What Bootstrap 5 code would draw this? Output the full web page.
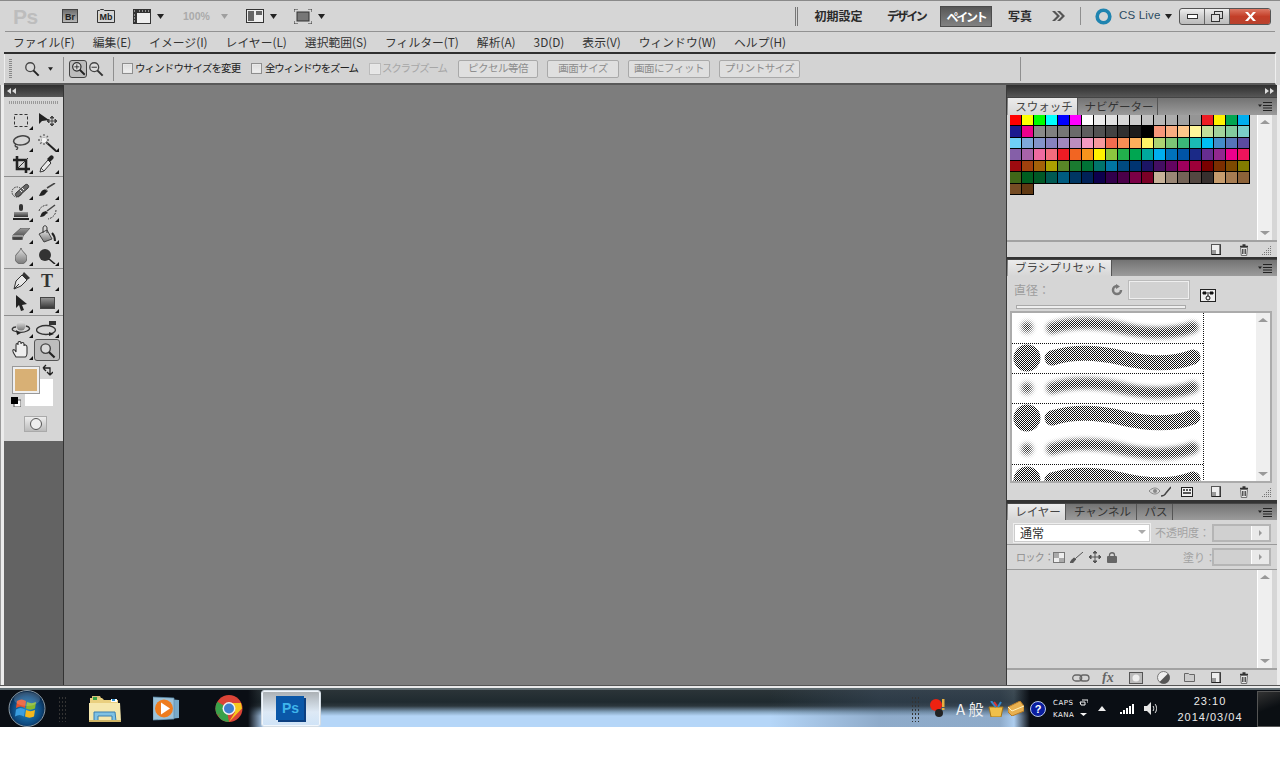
<!doctype html>
<html lang="ja"><head><meta charset="utf-8"><title>Photoshop CS5</title>
<link href="https://cdn.jsdelivr.net/npm/bootstrap@5.3.0/dist/css/bootstrap.min.css" rel="stylesheet">
<style>
html,body{height:100%;margin:0;background:#fff;overflow:hidden}
body{font-family:"Noto Sans CJK JP","Liberation Sans",sans-serif;font-size:12px;line-height:1;color:#2a2a2a}
svg{display:block;flex:none}
.gl-1{margin-left:1px}.gl-2{margin-left:2px}.gl-3{margin-left:3px}.gl-4{margin-left:4px}.gl-5{margin-left:5px}.gl-6{margin-left:6px}.gl-7{margin-left:7px}.gl-8{margin-left:8px}.gl-9{margin-left:9px}.gl-10{margin-left:10px}.gl-11{margin-left:11px}.gl-12{margin-left:12px}.gl-13{margin-left:13px}.gl-14{margin-left:14px}.gl-15{margin-left:15px}.gl-16{margin-left:16px}.gl-17{margin-left:17px}.gl-18{margin-left:18px}.gl-19{margin-left:19px}.gl-23{margin-left:23px}.gl-24{margin-left:24px}.gl-27{margin-left:27px}.gl-32{margin-left:32px}.gl-36{margin-left:36px}.gl-65{margin-left:65px}.gl-66{margin-left:66px}.gl-220{margin-left:220px}
.ps-app{width:1280px;height:688px;background:#d6d6d6;box-shadow:inset 0 1px 0 #8a8a8a}
.ps-appbar{height:32px;padding:1px 4px 0 8px;margin:0 5px;border-bottom:1px solid #929292;flex:none}
.ps-logo{font:700 21px/1 "Liberation Sans",sans-serif;color:#bdbdbd;width:22px;letter-spacing:-.5px}
.ps-zoomlbl{font:700 10.5px/1 "Liberation Sans",sans-serif;color:#aaa;width:28px;white-space:nowrap}
.ps-bold{font-weight:700;font-size:12px;color:#2b2b2b;text-align:center;white-space:nowrap}
.wa{width:49px}.wb{width:38px;letter-spacing:-2.4px}.wc{width:52px;height:21px;line-height:19px;color:#fff;background:linear-gradient(#575757,#828282);border:1px solid #4c4c4c;letter-spacing:-2.2px}.wd{width:24px}
.ps-csl{width:48px;font:11.5px/1 "Liberation Sans",sans-serif;color:#2b4a60;white-space:nowrap;letter-spacing:.2px}
.ps-vline{width:1px;height:18px;background:#8f8f8f}
.ps-dbl{width:3px;height:19px;border-left:1px solid #777;border-right:1px solid #777}
.ps-winbtns{width:92px;height:17px;border:1px solid #555;border-radius:3px;overflow:hidden;background:linear-gradient(#eee,#cfcfcf 50%,#bcbcbc)}
.ps-winbtns>div{height:100%;display:flex;align-items:center;justify-content:center}
.wmin,.wmax{width:25px;border-right:1px solid #666}.wcls{flex:1;background:linear-gradient(#dd7763,#c33e28 50%,#b8422e)}
.ps-menu{height:20px;padding-left:13px;gap:18px;flex:none;color:#333;font-size:11.8px;white-space:nowrap}
.ps-options{height:33px;margin:0 4px;border-top:2px solid #2e2e2e;border-bottom:2px solid #595959;border-right:1px solid #eee;flex:none;background:#d3d3d3;box-shadow:inset 1px 0 0 #eee}
.ps-grip{width:3px;height:20px;background:repeating-linear-gradient(#888 0 1px,transparent 1px 2px)}
.ps-sep{width:1px;height:24px;background:#8f8f8f}
.ps-zi{width:18px;height:18px;border:1px solid #444;border-radius:3px;background:#bdbdbd;display:flex;align-items:center;justify-content:center}
.ps-cb{width:11px;height:11px;border:1px solid #8e8e8e;background:linear-gradient(#ddd,#f0f0f0);box-shadow:inset 0 0 0 1px #e8e8e8;flex:none}
.ps-cb.off{background:#e6e6e6;border-color:#bbb;width:12px;height:12px}
.ps-opt{white-space:nowrap;font-size:10.5px;letter-spacing:-.9px;color:#222}
.o1{width:106px}.o2{width:93px;letter-spacing:-1.2px}.o3{width:65px;color:#a6a6a6;letter-spacing:-1.2px}
.ps-btn{height:18px;padding:0;font-size:10.5px;letter-spacing:-.5px;line-height:1;color:#8d8d8d;background:#dfdfdf;border:1px solid #a9a9a9;border-radius:2px;white-space:nowrap;pointer-events:none}
.b1{width:80px}.b2{width:72px}.b3{width:82px}.b4{width:81px}
.ps-work{height:600px;flex:none;padding:0 3px 0 4px;background:#ececec;box-shadow:inset 1px 0 0 #9a9a9a}
.ps-band{height:3px;flex:none;background:#e9e9e9;box-shadow:inset 0 1px 0 #555}
.ps-left{width:60px;background:#636363;border-right:1px solid #333;flex:none}
.ps-hdr{height:12px;flex:none;background:linear-gradient(#2f2f2f,#565656);padding:0 3px}
.ps-toolbox{height:344px;background:#d6d6d6;padding-top:4px;flex:none;position:relative}
.ps-gripx{height:3px;margin:0 5px 5px;background:repeating-linear-gradient(90deg,#999 0 1px,transparent 1px 2px)}
.ps-tools{display:grid;grid-template-columns:26px 26px;grid-auto-rows:22px;padding-left:4px}
.ps-tool{display:flex;align-items:center;justify-content:center;position:relative;height:22px}
.ps-fly::after{content:"";position:absolute;right:1px;bottom:1px;border-style:solid;border-width:0 0 4px 4px;border-color:transparent transparent #111 transparent}
.ps-tool.on{background:#bdbdbd;border:1px solid #555;border-radius:3px}
.ps-hr{height:1px;background:#8f8f8f;margin:1px 0 1px}
.ps-hrb{margin-bottom:2px}
.ps-fg{position:absolute;left:9px;top:270px;width:26px;height:26px;background:#d8b075;border:2px solid #efefef;outline:1px solid #999;z-index:2}
.ps-bg{position:absolute;left:21px;top:282px;width:28px;height:27px;background:#fff;z-index:1}
.ps-swap{position:absolute;left:38px;top:267px}
.ps-def{position:absolute;left:7px;top:300px}
.ps-qm{position:absolute;left:20px;top:319px;width:23px;height:16px;background:linear-gradient(#eee,#bbb);border:1px solid #aaa;display:flex;align-items:center;justify-content:center}
.ps-qm i{display:block;width:12px;height:12px;border-radius:50%;background:#eee;border:1px solid #555}
.ps-canvas{flex:1;background:#7d7d7d;border-right:1px solid #3a3a3a}
.ps-right{width:270px;flex:none;background:#333}
.ps-pane{background:#d6d6d6}
.ps-p1{height:160px;margin-bottom:2px}.ps-p2{height:241px;margin-bottom:3px}.ps-p3{height:182px}
.ps-tabs{height:17px;flex:none;background:linear-gradient(#737373,#9b9b9b);border-top:1px solid #444;padding:0 5px 0 1px;color:#333;font-size:11.5px;white-space:nowrap}
.ps-tall{height:18px}
.ps-tab{height:100%;display:flex;align-items:center;justify-content:center;border-right:1px solid #555;padding-left:3px}
.ps-tab.act{background:linear-gradient(#ececec,#d6d6d6);color:#444}
.t70{width:70px}.t80{width:80px}.t104{width:104px}.t58{width:58px}.t71{width:71px}.t36{width:36px}
.ps-sc{width:15px;flex:none;background:#efefef;border-left:1px solid #fff;display:flex;flex-direction:column;justify-content:space-between;align-items:center;padding:5px 0}
.ps-up{border-style:solid;border-width:0 5px 4px 5px;border-color:transparent transparent #999 transparent}
.ps-dn{border-style:solid;border-width:4px 5px 0 5px;border-color:#999 transparent transparent transparent}
.ps-swbody{height:125px;padding-left:3px;padding-right:5px}
.ps-swgrid{display:grid;grid-template-columns:repeat(20,12px);grid-auto-rows:11.43px;align-content:start}
.ps-swgrid div{border-right:1px solid #000;border-bottom:1px solid #000}
.ps-foot{height:17px;border-top:2px solid #a2a2a2;padding-right:5px;flex:none}
.ps-b1{height:28px;flex:none;padding-left:7px;color:#9d9d9d;font-size:12px}
.ps-lbl{width:32px;white-space:nowrap}
.ps-inp{width:60px;height:18px;background:#d2d2d2;border:1px solid #efefef;outline:1px solid #bbb}
.ps-drop{margin-top:9px}
.ps-slider{height:4px;flex:none;margin:1px 91px 2px 9px;background:#efefef;border:1px solid #aaa}
.ps-list{height:172px;margin:0 5px 0 3px;border:2px solid #ababab;flex:none;background:#fff}
.ps-b3a{height:25px;flex:none;padding:3px 0 2px 6px;border-bottom:1px solid #9a9a9a}
.ps-sel{width:138px;height:20px;background:#fff;padding-left:6px;font-size:12px;color:#333;border:1px solid #eee;box-shadow:inset 0 0 0 1px #ccc}
.ps-selc{flex:1}
.ps-op{color:#a2a2a2;font-size:11px;white-space:nowrap}
.o55{width:55px}.o26{width:26px}
.ps-numb{width:59px;height:18px;border:2px solid #b5b5b5;background:#d0d0d0;display:flex;justify-content:flex-end}
.ps-numb span{width:18px;height:100%;background:#e9e9e9;border-left:1px solid #fff;display:flex;align-items:center;justify-content:center}
.ps-numb i{display:block;border-style:solid;border-width:3px 0 3px 3px;border-color:transparent transparent transparent #999}
.ps-b3b{height:25px;flex:none;padding-left:9px;border-bottom:1px solid #9a9a9a;font-size:10px}
.ps-rk{width:30px;color:#8e8e8e;font-size:10px;letter-spacing:-.6px;white-space:nowrap}
.ps-b3c{flex:1;min-height:0;padding-right:5px}
.ps-task{width:1280px;height:39px;background:
 linear-gradient(90deg,#0a0e14 248px,rgba(10,14,20,0) 264px,rgba(10,14,20,0) 1014px,#0a0e14 1030px),
 linear-gradient(90deg,rgba(70,90,115,0) 770px,rgba(70,90,115,.35) 880px,rgba(70,90,115,.35) 1000px,rgba(140,170,200,.2) 1014px),
 linear-gradient(#2b3438 0,#1f2a2f 12px,#2c373d 16px,#86a5c0 22px,#b5d6f8 26px);
 border-top:2px solid #5f6b70}
.ps-tgrip{width:8px;height:26px;background-image:radial-gradient(#333 .7px,transparent .8px);background-size:3px 4px}
.ps-active{width:60px;height:37px;background:linear-gradient(#a9aeb2,#dde9f5 60%,#cfe3f7);border:1px solid #d4dde5;border-radius:3px;box-shadow:inset 0 0 0 1px #f0f6fc;display:flex;align-items:center;justify-content:center}
.ps-ps{fill:#3fb5ec;font:700 14px "Liberation Sans",sans-serif}
.ps-ime{color:#f1f1f1;font:400 15px/1 "Noto Sans CJK JP",sans-serif;width:30px;white-space:nowrap}
.ps-caps{color:#f4f4f4;font:7px/12px "DejaVu Sans",sans-serif;letter-spacing:.5px;width:23px}
.ps-clock{color:#eaeaea;font:11px/16px "Liberation Sans",sans-serif;text-align:center;width:66px;letter-spacing:1px;white-space:nowrap}
.ps-show{width:23px;height:36px;border:1px solid #555;border-right:0;background:linear-gradient(160deg,#333,#0b0f13 50%)}
.brs{fill:none;stroke:url(#chk);stroke-linecap:round}
</style></head><body>
<svg width="0" height="0" class="position-absolute"><defs>
<pattern id="chk" width="2" height="2" patternUnits="userSpaceOnUse"><rect width="2" height="2" fill="#fff"/><rect width="1" height="1" fill="#111"/><rect x="1" y="1" width="1" height="1" fill="#111"/></pattern>
<filter id="bl" x="-20%" y="-100%" width="140%" height="300%"><feGaussianBlur stdDeviation="2.2"/></filter>
<filter id="bl2" x="-60%" y="-60%" width="220%" height="220%"><feGaussianBlur stdDeviation="2.4"/></filter>
<symbol id="tri" viewBox="0 0 7 5"><path d="M0 0h7L3.500 5z" fill="#222"/></symbol>
<symbol id="new" viewBox="0 0 10 11"><rect x=".5" y=".5" width="9" height="10" fill="#eee" stroke="#555"/><path d="M1 6h4v4H1z" fill="#999"/><path d="M9 1v9" stroke="#222"/><path d="M1 10.500h9" stroke="#222"/></symbol>
<symbol id="trash" viewBox="0 0 10 12"><path d="M1 2.500h8M3.500 1h3" stroke="#333" fill="none" stroke-width="1.300"/><path d="M1.500 3.500h7l-.8 8H2.300z" fill="#e6e6e6" stroke="#555" stroke-width=".8"/><path d="M3.500 5v5M5 5v5M6.500 5v5" stroke="#444" stroke-width=".9"/></symbol>
<symbol id="rsz" viewBox="0 0 10 10"><path d="M8 1h1v1H8zM6 3h1v1H6zM8 3h1v1H8zM4 5h1v1H4zM6 5h1v1H6zM8 5h1v1H8zM2 7h1v1H2zM4 7h1v1H4zM6 7h1v1H6zM8 7h1v1H8zM0 9h1v1H0zM2 9h1v1H2zM4 9h1v1H4zM6 9h1v1H6zM8 9h1v1H8z" fill="#777"/></symbol>
<symbol id="pmenu" viewBox="0 0 14 9"><path d="M0 2.500h4L2 5z" fill="#222"/><path d="M5 .5h9M5 3.500h9M5 6h9M5 8.500h9" stroke="#222"/></symbol>
<symbol id="mag" viewBox="0 0 18 18"><circle cx="7" cy="7" r="5" fill="#d9d9d9" stroke="#444" stroke-width="1.500"/><path d="M10.500 10.500l6 6" stroke="#222" stroke-width="2.200"/></symbol>
<linearGradient id="gr" x1="0" y1="0" x2="0" y2="1"><stop offset="0" stop-color="#999"/><stop offset="1" stop-color="#333"/></linearGradient>
<linearGradient id="gl" x1="0" y1="0" x2="0" y2="1"><stop offset="0" stop-color="#e4e4e4"/><stop offset="1" stop-color="#777"/></linearGradient>
</defs></svg>

<div class="ps-app d-flex flex-column">
 <div class="ps-appbar d-flex align-items-center">
  <div class="ps-logo">Ps</div>
  <svg class="gl-27" width="16" height="14"><defs><linearGradient id="br" x1="0" y1="0" x2="0" y2="1"><stop offset="0" stop-color="#6b6b6b"/><stop offset="1" stop-color="#bcbcbc"/></linearGradient></defs><rect x=".5" y=".5" width="15" height="13" fill="url(#br)" stroke="#444"/><text x="8" y="10.500" text-anchor="middle" font-family="Liberation Sans" font-size="9" font-weight="700" fill="#222">Br</text></svg>
  <svg class="gl-19" width="18" height="14"><path d="M.5 1.500h2l1-1h3l1 1h10v12H.5z" fill="#d6d6d6" stroke="#333"/><text x="9" y="11" text-anchor="middle" font-family="Liberation Sans" font-size="9" font-weight="700" fill="#222">Mb</text></svg>
  <svg class="gl-18" width="18" height="15"><rect x=".5" y=".5" width="17" height="14" fill="#eee" stroke="#333"/><rect width="4" height="15" fill="#333"/><rect y="0" width="18" height="4" fill="#333"/><path d="M1 2h1M1 6h1M1 9h1M1 12h1M6 2h1M9 2h1M12 2h1M15 2h1" stroke="#eee"/></svg>
  <svg class="gl-6" width="7" height="5"><use href="#tri"/></svg>
  <div class="ps-zoomlbl gl-19">100%</div>
  <svg class="gl-10" width="7" height="5" opacity=".3"><use href="#tri"/></svg>
  <svg class="gl-18" width="18" height="14"><rect x=".5" y=".5" width="17" height="13" fill="#eee" stroke="#333"/><path d="M2 2h6v10H2zM10 2h6v4h-6z" fill="#666"/></svg>
  <svg class="gl-6" width="7" height="5"><use href="#tri"/></svg>
  <svg class="gl-17" width="18" height="15"><path d="M0 3V0h4M14 0h4v3M18 12v3h-4M4 15H0v-3" fill="none" stroke="#333"/><rect x="3" y="3" width="12" height="9" fill="#777" stroke="#333"/></svg>
  <svg class="gl-6" width="7" height="5"><use href="#tri"/></svg>
  <div class="ps-dbl ms-auto"></div>
  <div class="ps-bold wa gl-16">初期設定</div>
  <div class="ps-bold wb gl-24">デザイン</div>
  <div class="ps-bold wc gl-15">ペイント</div>
  <div class="ps-bold wd gl-16">写真</div>
  <svg class="gl-19" width="14" height="10"><path d="M1 0l5 5-5 5h3l5-5-5-5zM6 0l5 5-5 5h3l5-5-5-5z" fill="#555"/></svg>
  <div class="ps-vline gl-15"></div>
  <svg class="gl-14" width="17" height="17"><circle cx="8.500" cy="8.500" r="6.300" fill="none" stroke="#1f84b0" stroke-width="3.600"/></svg>
  <div class="ps-csl gl-7 d-flex align-items-center gap-1">CS Live<svg width="7" height="5"><use href="#tri"/></svg></div>
  <div class="ps-winbtns gl-12 d-flex">
   <div class="wmin"><svg width="11" height="5"><rect x=".5" y=".5" width="10" height="4" fill="#fff" stroke="#333"/></svg></div>
   <div class="wmax"><svg width="12" height="11"><rect x="3.500" y=".5" width="8" height="7" fill="none" stroke="#333"/><rect x=".5" y="3.500" width="8" height="7" fill="#ddd" stroke="#333"/></svg></div>
   <div class="wcls"><svg width="11" height="9"><path d="M0 0h3l2.500 3L8 0h3L7 4.500 11 9H8L5.500 6 3 9H0l4-4.500z" fill="#fff"/></svg></div>
  </div>
 </div>
 <div class="ps-menu d-flex align-items-center">
  <span>ファイル(F)</span><span>編集(E)</span><span>イメージ(I)</span><span>レイヤー(L)</span><span>選択範囲(S)</span><span>フィルター(T)</span><span>解析(A)</span><span>3D(D)</span><span>表示(V)</span><span>ウィンドウ(W)</span><span>ヘルプ(H)</span>
 </div>
 <div class="ps-options d-flex align-items-center">
  <div class="ps-grip gl-5"></div>
  <svg class="gl-12" width="16" height="16"><use href="#mag"/></svg>
  <svg class="gl-8" width="5" height="4"><use href="#tri"/></svg>
  <div class="ps-sep gl-10"></div>
  <div class="ps-zi gl-5"><svg width="15" height="15" viewBox="0 0 18 18"><circle cx="7" cy="7" r="5" fill="#ddd" stroke="#333" stroke-width="1.500"/><path d="M10.500 10.500l6 6" stroke="#222" stroke-width="2.200"/><path d="M4 7h6M7 4v6" stroke="#222"/></svg></div>
  <svg class="gl-1" width="16" height="16" viewBox="0 0 18 18"><circle cx="7" cy="7" r="5" fill="#ddd" stroke="#444" stroke-width="1.500"/><path d="M10.500 10.500l6 6" stroke="#333" stroke-width="2.200"/><path d="M4 7h6" stroke="#222"/></svg>
  <div class="ps-sep gl-9"></div>
  <div class="ps-cb gl-8"></div><div class="ps-opt o1 gl-2">ウィンドウサイズを変更</div>
  <div class="ps-cb gl-10"></div><div class="ps-opt o2 gl-3">全ウィンドウをズーム</div>
  <div class="ps-cb off gl-11"></div><div class="ps-opt o3 gl-1">スクラブズーム</div>
  <button class="btn ps-btn b1 gl-11" type="button">ピクセル等倍</button>
  <button class="btn ps-btn b2 gl-9" type="button">画面サイズ</button>
  <button class="btn ps-btn b3 gl-9" type="button">画面にフィット</button>
  <button class="btn ps-btn b4 gl-9" type="button">プリントサイズ</button>
  <div class="ps-sep gl-220"></div>
 </div>
 <div class="ps-work d-flex">
  <div class="ps-left d-flex flex-column">
   <div class="ps-hdr d-flex align-items-center"><svg width="9" height="6"><path d="M4 0v6L0 3zM9 0v6L5 3z" fill="#ddd"/></svg></div>
   <div class="ps-toolbox">
    <div class="ps-gripx"></div>
    <div class="ps-tools">
     <div class="ps-tool ps-fly"><svg width="14" height="13"><rect x=".5" y=".5" width="13" height="12" fill="none" stroke="#333" stroke-dasharray="3 2"/></svg></div>
     <div class="ps-tool"><svg width="19" height="14"><path d="M1 0v11l3-3 7-1z" fill="#222"/><path d="M14 3v10M9 8h10M14 3l-2 2h4zM14 13l-2-2h4zM9 8l2-2v4zM19 8l-2-2v4z" stroke="#444" fill="#444"/></svg></div>
     <div class="ps-tool ps-fly"><svg width="18" height="15"><ellipse cx="9.500" cy="5.500" rx="8" ry="4.500" fill="none" stroke="#444" stroke-width="1.500" transform="rotate(-8 9 5)"/><path d="M4 9c-2 2 0 3 1 3s1 2-1 3" fill="none" stroke="#444" stroke-width="1.300"/></svg></div>
     <div class="ps-tool ps-fly"><svg width="20" height="19"><path d="M9 9l10 9" stroke="#222" stroke-width="2"/><path d="M7 1v12M1 7h12M3 3l8 8M11 3l-8 8" stroke="#666" stroke-width="1.300" stroke-dasharray="2 1"/><circle cx="7" cy="7" r="2.500" fill="#f4f4f4"/></svg></div>
     <div class="ps-tool ps-fly"><svg width="17" height="17"><path d="M4 0v13h13M0 4h13v13" fill="none" stroke="#222" stroke-width="2.600"/><path d="M4 13L15 2" stroke="#333"/></svg></div>
     <div class="ps-tool ps-fly"><svg width="16" height="18"><path d="M1 17l1-4 7-8 3 3-7 8z" fill="#e8e8e8" stroke="#333"/><path d="M8 4l3-3c2-2 5 1 3 3l-3 3z" fill="#222"/><path d="M2 13l3 3" stroke="#555"/></svg></div>
    </div>
    <div class="ps-hr ps-hrb"></div>
    <div class="ps-tools">
     <div class="ps-tool ps-fly"><svg width="20" height="15"><circle cx="6" cy="9" r="5" fill="none" stroke="#333" stroke-dasharray="1.500 1"/><path d="M5 10l9-8c2-2 5 1 3 3l-9 8c-2 2-5-1-3-3z" fill="#666" stroke="#333"/><path d="M9 7l2 2M11 5l2 2" stroke="#eee"/></svg></div>
     <div class="ps-tool ps-fly"><svg width="18" height="14"><path d="M1 13c4 0 6-1 7-3l2-2-2-2-3 1C3 8 2 11 1 13z" fill="#222"/><path d="M9 5l8-5" stroke="#444" stroke-width="1.500"/><path d="M7 6l3 2" stroke="#999"/></svg></div>
     <div class="ps-tool ps-fly"><svg width="16" height="17"><rect x="6" width="4" height="7" rx="2" fill="#333"/><rect x="1" y="8" width="14" height="5" fill="url(#gr)"/><rect x="0" y="14" width="16" height="2" fill="#222"/></svg></div>
     <div class="ps-tool ps-fly"><svg width="19" height="16"><path d="M2 13c3 0 5-1 6-3l2-1-2-2-3 1C3 9 3 11 2 13z" fill="#222"/><path d="M9 7l8-6" stroke="#444" stroke-width="1.500"/><path d="M1 7C2 3 6 1 10 1M18 6c0 4-3 8-8 9" fill="none" stroke="#444" stroke-dasharray="2 1"/></svg></div>
     <div class="ps-tool ps-fly"><svg width="18" height="12"><path d="M0 8L9 0h9l-7 8-1 4H1z" fill="url(#gr)" stroke="#666"/><path d="M0 8h11" stroke="#ddd"/></svg></div>
     <div class="ps-tool ps-fly"><svg width="18" height="18"><path d="M1 9l8-4 5 9-8 3z" fill="url(#gl)" stroke="#444"/><path d="M5 8V3c0-3 4-3 4 0v5" fill="none" stroke="#333"/><path d="M14 8c2 2 3 6 3 8" stroke="#222" stroke-width="2" fill="none"/></svg></div>
     <div class="ps-tool ps-fly"><svg width="12" height="16"><path d="M6 0c1 4 6 6 6 10a6 6 0 0 1-12 0C0 6 5 4 6 0z" fill="url(#gl)" stroke="#666"/></svg></div>
     <div class="ps-tool ps-fly"><svg width="17" height="15"><circle cx="6" cy="6" r="6" fill="#333"/><path d="M10 10l6 5" stroke="#222" stroke-width="1.600"/></svg></div>
    </div>
    <div class="ps-hr"></div>
    <div class="ps-tools">
     <div class="ps-tool ps-fly"><svg width="17" height="18"><path d="M1 17l2-8 6-6 5 5-6 6z" fill="#e6e6e6" stroke="#333"/><path d="M9 3l2-3 6 6-3 2z" fill="#333"/><path d="M1 17l5-5" stroke="#333"/></svg></div>
     <div class="ps-tool ps-fly"><svg width="16" height="18"><text x="8" y="15" text-anchor="middle" font-family="Liberation Serif" font-size="18" font-weight="700" fill="#333">T</text></svg></div>
     <div class="ps-tool ps-fly"><svg width="11" height="16"><path d="M0 0v13l3-3 2 6 3-1-2-5 5-1z" fill="#222"/></svg></div>
     <div class="ps-tool ps-fly"><svg width="15" height="12"><rect x=".5" y=".5" width="14" height="11" fill="url(#gr)" stroke="#444"/></svg></div>
    </div>
    <div class="ps-hr"></div>
    <div class="ps-tools">
     <div class="ps-tool ps-fly"><svg width="20" height="15"><circle cx="10" cy="5" r="4.500" fill="url(#gl)"/><path d="M5 6C1 6 0 9 3 10s9 2 13 0 3-4-1-5" fill="none" stroke="#333" stroke-width="1.300"/><path d="M5 9l5 3-4 2z" fill="#222"/></svg></div>
     <div class="ps-tool ps-fly"><svg width="22" height="15"><rect x="13" y="0" width="7" height="4" fill="#333"/><ellipse cx="10" cy="9" rx="9.500" ry="4.500" fill="none" stroke="#333" stroke-width="1.300"/><path d="M13 11l5 2-5 2z" fill="#222"/></svg></div>
     <div class="ps-tool ps-fly"><svg width="18" height="18"><path d="M4 16C2 13 0 10 1 9s2 0 3 2V4c0-2 2-2 2 0V2c0-2 3-2 3 0v1c0-2 3-2 3 0v2c0-2 3-1 3 1v6c0 2-1 4-2 4z" fill="#eee" stroke="#333" stroke-width="1.100"/></svg></div>
     <div class="ps-tool on"><svg width="17" height="17" viewBox="0 0 18 18"><use href="#mag"/></svg></div>
    </div>
    <svg class="ps-swap" width="11" height="12"><path d="M1 4h7v7M1 4l3-3M1 4l3 3M8 11l-3-3M8 11l3-3" fill="none" stroke="#222" stroke-width="1.300"/></svg>
    <div class="ps-fg"></div><div class="ps-bg"></div>
    <svg class="ps-def" width="10" height="10"><rect x="3" y="3" width="7" height="7" fill="#fff" stroke="#555"/><rect width="7" height="7" fill="#000"/></svg>
    <div class="ps-qm"><i></i></div>
   </div>
  </div>
  <div class="ps-canvas"></div>
  <div class="ps-right d-flex flex-column">
   <div class="ps-hdr d-flex align-items-center justify-content-end"><svg width="9" height="6"><path d="M0 0v6l4-3zM5 0v6l4-3z" fill="#ddd"/></svg></div>
   <div class="ps-pane ps-p1 d-flex flex-column">
    <div class="ps-tabs ps-tall d-flex align-items-center"><div class="ps-tab act t70">スウォッチ</div><div class="ps-tab t80">ナビゲーター</div><svg class="ms-auto" width="14" height="9"><use href="#pmenu"/></svg></div>
    <div class="ps-swbody d-flex justify-content-between"><div class="ps-swgrid" id="sw"></div><div class="ps-sc"><div class="ps-up"></div><div class="ps-dn"></div></div></div>
    <div class="ps-foot d-flex align-items-center justify-content-end"><svg width="10" height="11"><use href="#new"/></svg><svg class="gl-18" width="10" height="12"><use href="#trash"/></svg><svg class="gl-13" width="10" height="10"><use href="#rsz"/></svg></div>
   </div>
   <div class="ps-pane ps-p2 d-flex flex-column">
    <div class="ps-tabs d-flex align-items-center"><div class="ps-tab act t104">ブラシプリセット</div><svg class="ms-auto" width="14" height="9"><use href="#pmenu"/></svg></div>
    <div class="ps-b1 d-flex align-items-center">
     <div class="ps-lbl">直径：</div>
     <svg class="gl-65" width="12" height="12"><path d="M6 2a4 4 0 1 0 4 4" fill="none" stroke="#777" stroke-width="2.500"/><path d="M5 0v5l4-2.500z" fill="#777"/></svg>
     <div class="ps-inp gl-6"></div>
     <svg class="gl-11 ps-drop" width="16" height="15"><rect x=".5" y="2.500" width="15" height="12" fill="#eee" stroke="#222"/><path d="M1 2h5l1 1H1z" fill="#222"/><circle cx="8" cy="11" r="2" fill="none" stroke="#111"/><path d="M8 5v4M3 5h3v2H3zM10 5h3v2h-3z" stroke="#111" fill="#111"/></svg>
    </div>
    <div class="ps-slider"></div>
    <div class="ps-list d-flex">
     <div class="flex-grow-1 overflow-hidden">
      <svg width="245" height="168" viewBox="0 0 245 168">
       <defs>
        <path id="wv" d="M40 0C62-7 85-6 110 0S160 7 181-1"/>
        <mask id="m1" maskUnits="userSpaceOnUse" x="0" y="0" width="245" height="168"><rect width="245" height="168" fill="#000"/>
         <g fill="none" stroke="#fff" stroke-width="11" stroke-linecap="round" filter="url(#bl)">
          <use href="#wv" transform="translate(0 15)"/><use href="#wv" transform="translate(0 75)"/><use href="#wv" transform="translate(0 136)"/></g>
         <g fill="#fff" filter="url(#bl2)"><circle cx="15" cy="14" r="5.500"/><circle cx="15" cy="75" r="5.500"/><circle cx="15" cy="136" r="5.500"/></g>
        </mask>
       </defs>
       <rect width="245" height="168" fill="url(#chk)" mask="url(#m1)"/>
       <g fill="url(#chk)"><circle cx="15" cy="45" r="13.500"/><circle cx="15" cy="105" r="13.500"/><circle cx="15" cy="167" r="13.500"/></g>
       <g class="brs" stroke-width="15"><use href="#wv" transform="translate(0 45)"/><use href="#wv" transform="translate(0 105)"/><use href="#wv" transform="translate(0 167)"/></g>
       <path d="M0 30.500h192M0 60.500h192M0 90.500h192M0 151.500h192M191.500 0v168" stroke="#111" stroke-dasharray="1 1" fill="none"/>
      </svg>
     </div>
     <div class="ps-sc"><div class="ps-up"></div><div class="ps-dn"></div></div>
    </div>
    <div class="ps-foot d-flex align-items-center justify-content-end flex-grow-1 border-0">
     <svg width="22" height="11"><path d="M0 5c4-4 8-4 11 0-3 4-7 4-11 0z" fill="none" stroke="#888"/><circle cx="6" cy="5" r="2" fill="#888"/><path d="M12 10c3 0 4-1 5-3l5-6" stroke="#444" stroke-width="1.500" fill="none"/></svg>
     <svg class="gl-10" width="12" height="10"><rect x=".5" y=".5" width="11" height="9" fill="#f0f0f0" stroke="#222"/><path d="M2 3h2M5 3h2M8 3h2M2 6h8" stroke="#222" stroke-width="1.500"/></svg>
     <svg class="gl-18" width="10" height="11"><use href="#new"/></svg><svg class="gl-18" width="10" height="12"><use href="#trash"/></svg><svg class="gl-13" width="10" height="10"><use href="#rsz"/></svg>
    </div>
   </div>
   <div class="ps-pane ps-p3 d-flex flex-column">
    <div class="ps-tabs d-flex align-items-center"><div class="ps-tab act t58">レイヤー</div><div class="ps-tab t71">チャンネル</div><div class="ps-tab t36">パス</div><svg class="ms-auto" width="14" height="9"><use href="#pmenu"/></svg></div>
    <div class="ps-b3a d-flex align-items-center">
     <div class="ps-sel d-flex align-items-center"><span class="ps-selc">通常</span><svg width="18" height="5" viewBox="-6 0 18 5"><path d="M0 0h8L4 4z" fill="#aaa"/></svg></div>
     <div class="ps-op o55 gl-4">不透明度：</div>
     <div class="ps-numb gl-2"><span><i></i></span></div>
    </div>
    <div class="ps-b3b d-flex align-items-center">
     <div class="ps-rk">ロック：</div>
     <svg class="gl-7" width="12" height="11"><rect x=".5" y=".5" width="11" height="10" fill="#eee" stroke="#777"/><path d="M1 1h5v5H1zM6 6h5v4H6z" fill="#aaa"/></svg>
     <svg class="gl-5" width="13" height="11"><path d="M0 11c3 0 4-1 5-3l1-1-2-1C2 7 1 9 0 11zM6 6l7-6" stroke="#555" fill="#555"/></svg>
     <svg class="gl-6" width="12" height="12"><path d="M6 0v12M0 6h12M6 0L4 2h4zM6 12l-2-2h4zM0 6l2-2v4zM12 6l-2-2v4z" stroke="#555" fill="#555"/></svg>
     <svg class="gl-6" width="10" height="11"><rect y="4" width="10" height="7" rx="1" fill="#666"/><path d="M2.500 5V3c0-3 5-3 5 0v2" fill="none" stroke="#666" stroke-width="1.300"/></svg>
     <div class="ps-op o26 gl-66">塗り：</div>
     <div class="ps-numb gl-3"><span><i></i></span></div>
    </div>
    <div class="ps-b3c d-flex justify-content-end"><div class="ps-sc"><div class="ps-up"></div><div class="ps-dn"></div></div></div>
    <div class="ps-foot d-flex align-items-center justify-content-end">
     <svg width="18" height="8"><rect x=".7" y="1" width="9" height="6" rx="3" fill="none" stroke="#666" stroke-width="1.300"/><rect x="8" y="1" width="9" height="6" rx="3" fill="none" stroke="#666" stroke-width="1.300"/></svg>
     <svg class="gl-12" width="15" height="13"><text x="0" y="11" font-family="Liberation Serif" font-size="14" font-style="italic" font-weight="700" fill="#666">fx</text></svg>
     <svg class="gl-12" width="14" height="12"><rect x=".5" y=".5" width="13" height="11" fill="#bbb" stroke="#555"/><circle cx="7" cy="6" r="3.500" fill="#eee"/></svg>
     <svg class="gl-14" width="14" height="13"><circle cx="6.500" cy="6.500" r="6" fill="#eee" stroke="#777"/><path d="M11 2.500A6 6 0 0 1 2.500 11z" fill="#555"/></svg>
     <svg class="gl-13" width="11" height="9"><path d="M.5 8.500v-8h4l1 1h5v7z" fill="#ccc" stroke="#666"/></svg>
     <svg class="gl-16" width="10" height="11"><use href="#new"/></svg><svg class="gl-18" width="10" height="12"><use href="#trash"/></svg><svg class="gl-13" width="10" height="10" opacity="0"><use href="#rsz"/></svg>
    </div>
   </div>
  </div>
 </div>
 <div class="ps-band"></div>
</div>

<div class="ps-task d-flex align-items-center">
 <svg class="gl-8" width="38" height="37" viewBox="0 0 38 37">
  <defs><radialGradient id="orb" cx=".5" cy=".55" r=".55"><stop offset="0" stop-color="#1f8dc9"/><stop offset=".7" stop-color="#0e4a80"/><stop offset="1" stop-color="#08223f"/></radialGradient></defs>
  <circle cx="19" cy="18.500" r="18" fill="url(#orb)" stroke="#8a9aa5"/>
  <path d="M9 11c3-2 6-2 9 0l-1 7c-3-2-6-2-9 0z" fill="#e8532b"/><path d="M19 12c3 1.500 6 1.500 9 0l-1 6.500c-3 1.500-6 1.500-9 0z" fill="#86b82f"/><path d="M8 19.500c3-2 6-2 9 0l-1 7c-3-2-6-2-9 0z" fill="#3a9ee0"/><path d="M18 20c3 1.500 6 1.500 9 0l-1 6.500c-3 1.500-6 1.500-9 0z" fill="#f5b81c"/>
  <ellipse cx="19" cy="9" rx="13" ry="7" fill="#fff" opacity=".16"/>
 </svg>
 <div class="ps-tgrip gl-12"></div>
 <svg class="gl-23" width="32" height="28" viewBox="0 0 32 28">
  <path d="M1 3h12l2 2h14v21H1z" fill="#e9cf7f"/><path d="M3 1h8l1 2H3z" fill="#d9c27a"/><rect x="4" y="2" width="4" height="3" fill="#3aa34a"/><rect x="22" y="4" width="6" height="3" fill="#fff"/><rect x="23" y="4" width="3" height="2" fill="#2f8fd0"/>
  <path d="M0 8h31l1 18H0z" fill="#f5e7ad"/><path d="M5 26v-9h21l1 9h-4v-5H9v5z" fill="#7fc1e4" stroke="#3a7fb0"/><rect x="0" y="25" width="32" height="2" fill="#cfb566"/>
 </svg>
 <svg class="gl-32" width="26" height="25" viewBox="0 0 26 25">
  <path d="M5 2l21 2v18L5 24z" fill="#78aac9"/><path d="M0 1l21 1v21L0 24z" fill="#9cc2d9" stroke="#5c8eaf" stroke-width=".7"/>
  <circle cx="11" cy="12.500" r="9" fill="#ee7c1e"/><path d="M8 6.500l9 6-9 6z" fill="#fff"/>
 </svg>
 <svg class="gl-36" width="28" height="27" viewBox="0 0 28 27">
  <circle cx="14" cy="13.500" r="13.500" fill="#db4437"/><path d="M14 13.500L2.300 20.200A13.500 13.500 0 0 1 2.300 6.800z" fill="#3aa14a"/><path d="M3 21l8-10 3 16A13.500 13.500 0 0 1 3 21z" fill="#3aa14a"/><path d="M14 27L27 13.500 26 8H14l6 9z" fill="#f7c81e"/>
  <circle cx="14" cy="13.500" r="6.500" fill="#f1f1f1"/><circle cx="14" cy="13.500" r="5" fill="#3f7fd0"/>
 </svg>
 <div class="ps-active gl-18"><svg width="30" height="26" viewBox="0 0 30 26"><rect x="2" y="2" width="28" height="24" fill="#0c3f80"/><rect width="28" height="24" fill="#0a57a8"/><text class="ps-ps" x="6" y="17">Ps</text></svg></div>
 <div class="ps-tgrip ms-auto"></div>
 <svg class="gl-10" width="17" height="19" viewBox="0 0 17 19"><circle cx="7" cy="6" r="6" fill="#e21"/><rect x="13" y="0" width="2.500" height="8" fill="#e8b040"/><rect x="13" y="9" width="2.500" height="2" fill="#e8b040"/><circle cx="10" cy="14" r="4" fill="#222"/></svg>
 <div class="ps-ime gl-10">A 般</div>
 <svg class="gl-2" width="16" height="16"><path d="M1 6h14l-2 10H3z" fill="#f0c04a" stroke="#a5761a"/><path d="M3 0l5 6M13 1l-3 5" stroke="#38c" stroke-width="2"/><path d="M6 1l3 4" stroke="#d33" stroke-width="2"/></svg>
 <svg class="gl-4" width="16" height="15"><path d="M0 6l12-6 4 5v5L4 15 0 11z" fill="#e8b050" stroke="#b87a22"/><path d="M0 6l4 4 12-5" fill="none" stroke="#fff2c0"/></svg>
 <svg class="gl-6" width="16" height="16"><circle cx="8" cy="8" r="7.500" fill="#0a1ea0" stroke="#b8c8e8"/><text x="8" y="12" text-anchor="middle" font-family="Liberation Sans" font-size="11" font-weight="700" fill="#fff">?</text></svg>
 <div class="ps-caps gl-7">CAPS<br>KANA</div>
 <svg class="gl-3" width="9" height="20"><path d="M1 3h5v3H2zM3 1h6v3" fill="none" stroke="#f4f4f4"/><path d="M1 14h7l-3.500 3z" fill="#f4f4f4"/></svg>
 <svg class="gl-10" width="8" height="5"><path d="M0 5h8L4 0z" fill="#eee"/></svg>
 <svg class="gl-14" width="14" height="10"><path d="M0 8h2v2H0zM3 6h2v4H3zM6 4h2v6H6zM9 2h2v8H9zM12 0h2v10h-2z" fill="#fff"/></svg>
 <svg class="gl-10" width="14" height="13"><path d="M0 4h3l4-4v13L3 9H0z" fill="#e6e6e6"/><path d="M9 4c1 1 1 4 0 5M11 2c2 2 2 7 0 9" fill="none" stroke="#e6e6e6"/></svg>
 <div class="ps-clock gl-19">23:10<br>2014/03/04</div>
 <div class="ps-show gl-14"></div>
</div>
<script>
var c="ff0000 ffff00 00ff00 00ffff 0000ff ff00ff ffffff ebebeb e1e1e1 d7d7d7 cccccc c2c2c2 b7b7b7 acacac a1a1a1 959595 ed1c24 fff200 00a651 00aeef 1b1b8f ec008c 898989 808080 767676 6b6b6b 5e5e5e 515151 424242 303030 1c1c1c 000000 f7977a f9ad81 fdc68a fff79a c4df9b a3d39c 82ca9d 7bcdc8 6ecff6 7ea7d8 8493ca 8882be a187be bc8dbf f49ac2 f6989d f26c4f f68e55 fbaf5c fff467 acd372 7cc576 3bb878 1abbb4 00bff3 438cca 5574b9 5c4b9f 855fa8 a763a8 ee6aa0 f26d7d ed1c24 f26522 f7941d fff200 8dc63f 22b14c 00a651 00a99d 00aeef 0072bc 0054a6 1b2a87 662d91 92278f ec008c ed145b 9e0b0f a0410d a36209 aba000 598527 1a7b30 007236 00746b 0076a3 004b80 003471 1b1464 440e62 630460 9e005d 9e0039 790000 7b2e00 7d4900 827b00 406618 005e20 005826 005952 005b7f 003663 002157 0d004c 32004b 4b0049 7b0046 7a0026 c7b299 998675 736357 534741 362f2d c69c6d a67c52 8c6239 754c24 603913".split(" ");
var g=document.getElementById("sw");c.forEach(function(h){var d=document.createElement("div");d.style.background="#"+h;g.appendChild(d)});
</script>
</body></html>
